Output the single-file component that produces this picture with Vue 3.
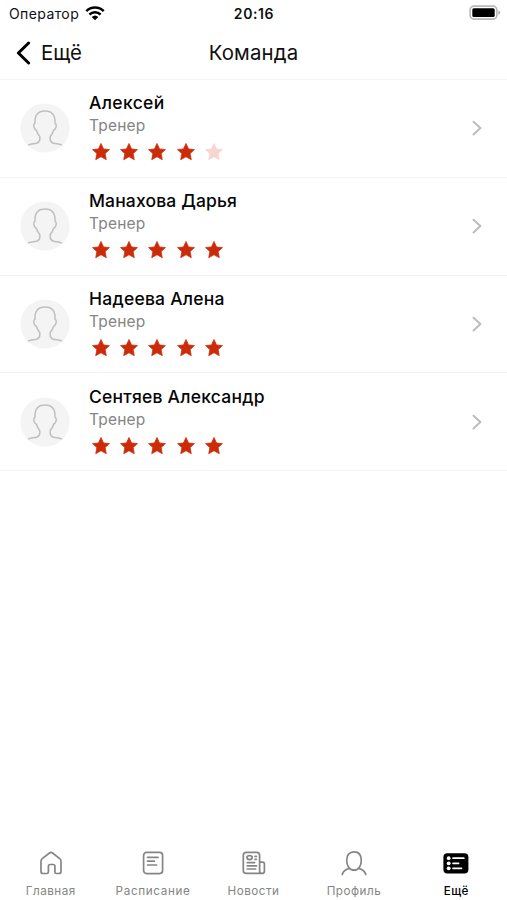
<script setup>
const members = [
  { name: 'Алексей', role: 'Тренер', rating: 4, cls: 'n1' },
  { name: 'Манахова Дарья', role: 'Тренер', rating: 5, cls: 'n2' },
  { name: 'Надеева Алена', role: 'Тренер', rating: 5, cls: 'n3' },
  { name: 'Сентяев Александр', role: 'Тренер', rating: 5, cls: 'n4' },
]
</script>

<template>
  <div class="screen">
    <div class="status">
      <div class="carrier">
        <span>Оператор</span>
        <svg class="wifi" width="20" height="15" viewBox="0 0 20 15">
          <g fill="none" stroke="#000" stroke-width="2.5">
            <path d="M1.3 5.2a12.3 12.3 0 0 1 17.4 0" />
            <path d="M4.4 8.5a8 8 0 0 1 11.2 0" />
          </g>
          <path d="M6.7 11a4.8 4.8 0 0 1 6.6 0L10 14.2z" />
        </svg>
      </div>
      <span class="time">20:16</span>
      <svg class="battery" width="32" height="16" viewBox="0 0 32 16">
        <rect x="1.1" y="1.1" width="26.8" height="13" rx="3.8" fill="#fff" stroke="#b9b9b9" stroke-width="1.6" />
        <rect x="3.3" y="3.3" width="22.4" height="8.8" rx="1.5" />
        <path d="M29.4 5.4q1.8.8 1.8 2.2t-1.8 2.2z" fill="#aaa" />
      </svg>
    </div>

    <header class="nav">
      <div class="back">
        <svg width="16" height="24" viewBox="0 0 16 24">
          <path d="M13.6 2 3.4 12l10.2 10" fill="none" stroke="#000" stroke-width="3" stroke-linecap="round" stroke-linejoin="round" />
        </svg>
        <span>Ещё</span>
      </div>
      <h1>Команда</h1>
    </header>

    <main class="list">
      <div v-for="m in members" :key="m.name" class="row">
        <svg class="avatar" width="50" height="50" viewBox="0 0 50 50">
          <circle cx="25" cy="25" r="24.6" fill="#f4f4f4" />
          <path d="M8.6 41.9C11 40.6 14 41 16.6 40.2C19.2 39.4 19.8 38 19.8 36V33.5C18.2 31.7 17 29.5 16.4 27.2C14.6 26.6 13.1 23.2 14 21.2C14.3 20.5 15 20.6 15 20C14.6 12.5 17.5 8 25 8S35.4 12.5 35 20C35 20.6 35.7 20.5 36 21.2C36.9 23.2 35.4 26.6 33.6 27.2C33 29.5 31.8 31.7 30.2 33.5V36C30.2 38 30.8 39.4 33.4 40.2C36 41 39 40.6 41.4 41.9" fill="none" stroke="#c0c0c0" stroke-width="1.5" stroke-linecap="round" stroke-linejoin="round" />
        </svg>
        <div class="info">
          <span class="name" :class="m.cls">{{ m.name }}</span>
          <span class="role">{{ m.role }}</span>
          <div class="stars">
            <svg v-for="i in 5" :key="i" :class="{ off: i > m.rating }" width="20" height="20" viewBox="0 0 20 20">
              <path d="M10 1.4 12.6 6.9 18.5 7.6 14.2 11.6 15.3 17.7 10 14.8 4.7 17.7 5.8 11.6 1.5 7.6 7.4 6.9z" stroke-width=".7" stroke-linejoin="round" />
            </svg>
          </div>
        </div>
        <svg class="chevron" width="12" height="18" viewBox="0 0 12 18">
          <path d="M2.5 2.7 9.4 9.1l-6.9 6.4" fill="none" stroke="#bcbcbc" stroke-width="2" stroke-linecap="round" stroke-linejoin="round" />
        </svg>
      </div>
    </main>

    <nav class="tabs">
      <div class="tab">
        <svg width="28" height="28" viewBox="0 0 28 28">
          <path d="M4 12.2q0-1.6 1.2-2.6l7.3-5.6q1.5-1.2 3 0l7.3 5.6q1.2 1 1.2 2.6v10.3q0 2-2 2h-2.6q-1.5 0-1.5-1.5v-5.7q0-1.8-1.8-1.8h-2.9q-1.8 0-1.8 1.8V23q0 1.5-1.5 1.5H6q-2 0-2-2z" />
        </svg>
        <span>Главная</span>
      </div>
      <div class="tab schedule">
        <svg width="28" height="28" viewBox="0 0 28 28">
          <rect x="4.6" y="3.4" width="19" height="21.2" rx="3" />
          <path d="M8.5 8.4h10.5M8.5 12.2h6.8M8.5 16h9" />
        </svg>
        <span>Расписание</span>
      </div>
      <div class="tab">
        <svg width="28" height="28" viewBox="0 0 28 28">
          <path d="M20.6 24.4H6.3q-3 0-3-3V6.4q0-3 3-3h10.3q3 0 3 3v15.5q0 2.5 2.4 2.5t2.4-2.5v-7q0-1.8-1.8-1.8h-3" />
          <ellipse cx="9.6" cy="8.6" rx="2.6" ry="2" />
          <path d="M15 7.4h1.3M15 10.4h1.3M7.2 13.6h7.4M7.2 16.8h9.4M7.2 20h8.4" />
        </svg>
        <span>Новости</span>
      </div>
      <div class="tab profile">
        <svg width="28" height="28" viewBox="0 0 28 28">
          <path d="M14 2.8c4.8 0 7.3 3.3 7.3 8.5S18.8 21.2 14 21.2s-7.3-4.7-7.3-9.9S9.2 2.8 14 2.8zM9.6 19.4Q3.6 20.8 2.2 25.5M18.4 19.4q6 1.4 7.4 6.1" />
        </svg>
        <span>Профиль</span>
      </div>
      <div class="tab active">
        <svg width="28" height="28" viewBox="0 0 28 28">
          <rect class="solid" x="1.4" y="4.2" width="25" height="20.2" rx="4" />
          <g class="dots"><circle cx="6.7" cy="9.2" r="1.9" /><circle cx="6.7" cy="14.3" r="1.9" /><circle cx="6.7" cy="19.3" r="1.9" /></g>
          <path class="lines" d="M11 9.2h10.8M11 14.3h5.6M11 19.3h8.5" />
        </svg>
        <span>Ещё</span>
      </div>
    </nav>
  </div>
</template>

<style>
body { margin: 0; background: #fff; }
</style>

<style scoped>
.screen { width: 507px; height: 900px; display: flex; flex-direction: column; background: #fff; color: #101010; font-family: Inter, Roboto, sans-serif; overflow: hidden; }
svg { display: block; flex: none; }
span, h1 { white-space: nowrap; }
.status { height: 28px; display: grid; grid-template-columns: 1fr auto 1fr; align-items: center; padding: 0 6px 0 9px; }
.carrier { display: flex; align-items: center; gap: 6px; font-size: 14px; line-height: 20px; letter-spacing: .4px; }
.wifi { margin-top: -2px; }
.time { margin-right: 2px; font-size: 14px; font-weight: 600; letter-spacing: .6px; line-height: 20px; }
.battery { justify-self: end; margin-top: -2px; }
.nav { height: 50px; display: grid; grid-template-columns: 1fr auto 1fr; align-items: center; padding: 0 15px 1px; border-bottom: 1px solid #f4f4f4; }
.back { display: flex; align-items: center; gap: 10px; font-size: 20.4px; line-height: 26px; }
.back span, h1 { padding-bottom: 1px; }
h1 { margin: 0; font-size: 20.4px; font-weight: 400; line-height: 26px; letter-spacing: .15px; }
.list { flex: 1; }
.row { box-sizing: border-box; height: 97.75px; display: flex; align-items: center; padding: 0 24px 0 20px; border-bottom: 1px solid #f4f4f4; }
.info { flex: 1; display: flex; flex-direction: column; margin-left: 19px; padding-bottom: 3px; }
.name { font-size: 17.5px; line-height: 24px; font-weight: 500; letter-spacing: .23px; color: #050505; }
.n1 { letter-spacing: .35px; }
.n2 { letter-spacing: .14px; }
.role { font-size: 15.5px; line-height: 22px; color: #858585; letter-spacing: .2px; }
.stars { display: flex; gap: 8.2px; margin: 5px 0 0 2px; }
.stars svg { fill: #cb2b08; stroke: #cb2b08; }
.stars svg.off { fill: #f6d6cf; stroke: #f6d6cf; }
.tabs { height: 56px; display: flex; }
.tab { flex: 1; display: flex; flex-direction: column; align-items: center; color: #858585; font-size: 11.7px; line-height: 16px; letter-spacing: .5px; gap: 6px; padding-top: 5px; }
.schedule { padding-left: 1px; margin-right: -1px; }
.schedule span { letter-spacing: .65px; }
.profile { padding-right: 1px; margin-left: -1px; }
.tab svg { fill: none; stroke: #858585; stroke-width: 1.7; stroke-linecap: round; stroke-linejoin: round; }
.active { color: #000; font-weight: 500; }
.tab .solid { fill: #000; stroke: none; }
.tab .dots { fill: #fff; stroke: none; }
.tab .lines { stroke: #fff; }
</style>
